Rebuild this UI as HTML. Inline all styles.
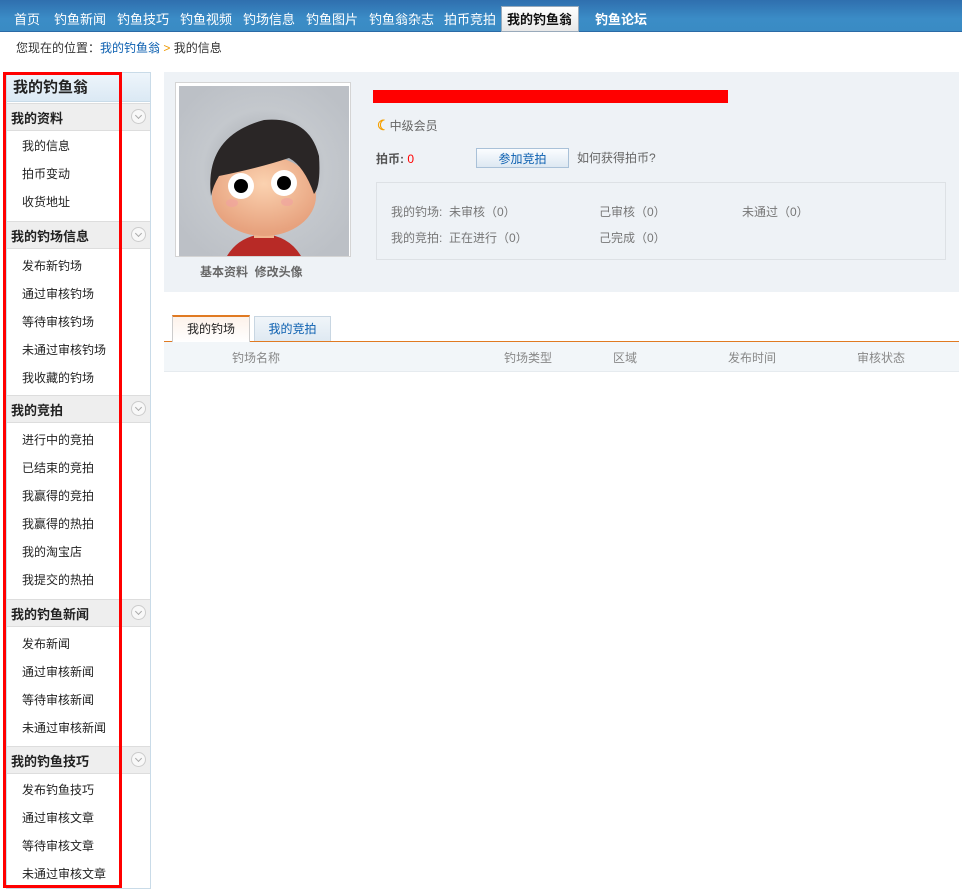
<!DOCTYPE html>
<html><head><meta charset="utf-8"><style>
*{margin:0;padding:0;box-sizing:border-box}
body{width:962px;height:889px;background:#fff;font-family:"Liberation Sans","Noto Sans CJK SC",sans-serif;font-size:12px;color:#333;position:relative;overflow:hidden}
.a{position:absolute;white-space:nowrap}
#nav{left:0;top:0;width:962px;height:32px;background:linear-gradient(#2f6fae,#3b8cc6 60%,#3a8bc4);border-bottom:1px solid #2a6aa6}
#nav span{position:absolute;top:9px;color:#fff;font-size:13px}
#act{left:501px;top:6px;width:78px;height:26px;background:linear-gradient(#fff,#e8e8e8);border:1px solid #9ab}
.sb{left:6px;top:72px;width:145px;height:817px;border:1px solid #c9dbe8;border-top:none}
.ttl{left:6px;top:72px;width:145px;height:30px;background:linear-gradient(#eef5fb,#dbe9f4);border:1px solid #c9dbe8;font-size:15px;font-weight:bold;padding:3px 0 0 6px;color:#222}
.hd{position:absolute;left:7px;width:143px;height:28px;background:#eee;border-top:1px solid #ddd;border-bottom:1px solid #ddd;font-weight:bold;font-size:13px;padding:4px 0 0 4px;color:#222}
.hd i{position:absolute;right:4px;top:5px;width:15px;height:15px;border-radius:50%;border:1px solid #ccc;background:#f8f8f8}
.hd i:after{content:"";position:absolute;left:4px;top:3px;width:4px;height:4px;border-right:1px solid #aaa;border-bottom:1px solid #aaa;transform:rotate(45deg)}
.it{position:absolute;left:22px;font-size:12px;color:#222}
</style></head><body>
<div id="nav" class="a">
<div id="act" class="a"></div>
<span style="left:14px">首页</span><span style="left:54px">钓鱼新闻</span><span style="left:117px">钓鱼技巧</span><span style="left:180px">钓鱼视频</span><span style="left:243px">钓场信息</span><span style="left:306px">钓鱼图片</span><span style="left:369px">钓鱼翁杂志</span><span style="left:444px">拍币竞拍</span><span style="left:507px;color:#111;font-weight:bold">我的钓鱼翁</span><span style="left:595px;font-weight:bold">钓鱼论坛</span>
</div>
<div class="a" style="left:16px;top:39px">您现在的位置：<span style="color:#0b5fb0">我的钓鱼翁</span> <span style="color:#e90">&gt;</span> 我的信息</div>

<div class="a sb"></div>
<div class="a ttl">我的钓鱼翁</div>
<div class="hd" style="top:103px">我的资料<i></i></div>
<div class="it" style="top:137px">我的信息</div><div class="it" style="top:165px">拍币变动</div><div class="it" style="top:193px">收货地址</div>
<div class="hd" style="top:221px">我的钓场信息<i></i></div>
<div class="it" style="top:257px">发布新钓场</div><div class="it" style="top:285px">通过审核钓场</div><div class="it" style="top:313px">等待审核钓场</div><div class="it" style="top:341px">未通过审核钓场</div><div class="it" style="top:369px">我收藏的钓场</div>
<div class="hd" style="top:395px">我的竞拍<i></i></div>
<div class="it" style="top:431px">进行中的竞拍</div><div class="it" style="top:459px">已结束的竞拍</div><div class="it" style="top:487px">我赢得的竞拍</div><div class="it" style="top:515px">我赢得的热拍</div><div class="it" style="top:543px">我的淘宝店</div><div class="it" style="top:571px">我提交的热拍</div>
<div class="hd" style="top:599px">我的钓鱼新闻<i></i></div>
<div class="it" style="top:635px">发布新闻</div><div class="it" style="top:663px">通过审核新闻</div><div class="it" style="top:691px">等待审核新闻</div><div class="it" style="top:719px">未通过审核新闻</div>
<div class="hd" style="top:746px">我的钓鱼技巧<i></i></div>
<div class="it" style="top:781px">发布钓鱼技巧</div><div class="it" style="top:809px">通过审核文章</div><div class="it" style="top:837px">等待审核文章</div><div class="it" style="top:865px">未通过审核文章</div>
<div class="a" style="left:3px;top:72px;width:119px;height:816px;border:3px solid #f00"></div>

<div class="a" style="left:164px;top:72px;width:795px;height:220px;background:#eef2f6"></div>
<div class="a" style="left:175px;top:82px;width:176px;height:175px;border:1px solid #d4d4d4;background:#fff;padding:3px">
<svg width="170" height="170" viewBox="0 0 170 170"><defs><radialGradient id="bg" cx="50%" cy="50%" r="60%"><stop offset="0" stop-color="#9a9ea4"/><stop offset=".6" stop-color="#c4c8cd"/><stop offset="1" stop-color="#bcc0c6"/></radialGradient><radialGradient id="sk" cx="50%" cy="35%" r="60%"><stop offset="0" stop-color="#fbd2b0"/><stop offset="1" stop-color="#e7a27e"/></radialGradient></defs>
<rect width="170" height="170" fill="url(#bg)"/>
<path d="M48 170 Q60 150 85 148 Q110 150 122 170Z" fill="#b82a26"/>
<rect x="75" y="138" width="20" height="14" fill="#f0b58f"/>
<ellipse cx="85" cy="110" rx="52" ry="40" fill="url(#sk)"/>
<path d="M32 110 Q25 50 85 34 Q130 30 140 70 Q142 100 135 108 Q125 80 110 72 Q80 82 40 90 Q34 100 32 110Z" fill="#2a2626"/>
<circle cx="62" cy="100" r="13" fill="#fff"/><circle cx="62" cy="100" r="7" fill="#000"/>
<circle cx="105" cy="97" r="13" fill="#fff"/><circle cx="105" cy="97" r="7" fill="#000"/>
<ellipse cx="53" cy="117" rx="6" ry="4" fill="#f0a0a0" opacity=".6"/><ellipse cx="108" cy="116" rx="6" ry="4" fill="#f0a0a0" opacity=".6"/>
</svg></div>
<div class="a" style="left:200px;top:263px;font-weight:bold;color:#666">基本资料 &nbsp;修改头像</div>
<div class="a" style="left:373px;top:90px;width:355px;height:13px;background:#f00"></div>
<div class="a" style="left:377px;top:117px;color:#666"><span style="color:#f5a000;font-weight:bold;font-size:14px">☾</span>中级会员</div>
<div class="a" style="left:376px;top:150px;font-weight:bold;color:#555">拍币: <span style="color:#f00;font-weight:normal">0</span></div>
<div class="a" style="left:476px;top:148px;width:93px;height:20px;border:1px solid #a9c1d8;background:linear-gradient(#fbfdff,#dde8f2);color:#0b5fb0;text-align:center;line-height:20px">参加竞拍</div>
<div class="a" style="left:577px;top:149px;color:#666">如何获得拍币?</div>
<div class="a" style="left:376px;top:182px;width:570px;height:78px;border:1px solid #dde1e5"></div>
<div class="a" style="left:391px;top:203px;color:#777">我的钓场: &nbsp;未审核（0）</div>
<div class="a" style="left:599px;top:203px;color:#777">己审核（0）</div>
<div class="a" style="left:742px;top:203px;color:#777">未通过（0）</div>
<div class="a" style="left:391px;top:229px;color:#777">我的竞拍: &nbsp;正在进行（0）</div>
<div class="a" style="left:599px;top:229px;color:#777">己完成（0）</div>

<div class="a" style="left:172px;top:315px;width:78px;height:27px;border:1px solid #ccc;border-top:2px solid #e07a22;border-bottom:none;background:linear-gradient(#fdf2ea,#fff);text-align:center;line-height:25px;color:#222;z-index:2">我的钓场</div>
<div class="a" style="left:254px;top:316px;width:77px;height:25px;border:1px solid #c8d6e2;border-bottom:none;background:linear-gradient(#f0f5f9,#dfe9f2);text-align:center;line-height:24px;color:#0b5fb0">我的竞拍</div>
<div class="a" style="left:164px;top:341px;width:795px;height:31px;background:#f2f6f9;border-top:1px solid #e07a22;border-bottom:1px solid #e6ebef;color:#888">
<span class="a" style="left:68px;top:7px">钓场名称</span><span class="a" style="left:340px;top:7px">钓场类型</span><span class="a" style="left:449px;top:7px">区域</span><span class="a" style="left:564px;top:7px">发布时间</span><span class="a" style="left:693px;top:7px">审核状态</span></div>
</body></html>
